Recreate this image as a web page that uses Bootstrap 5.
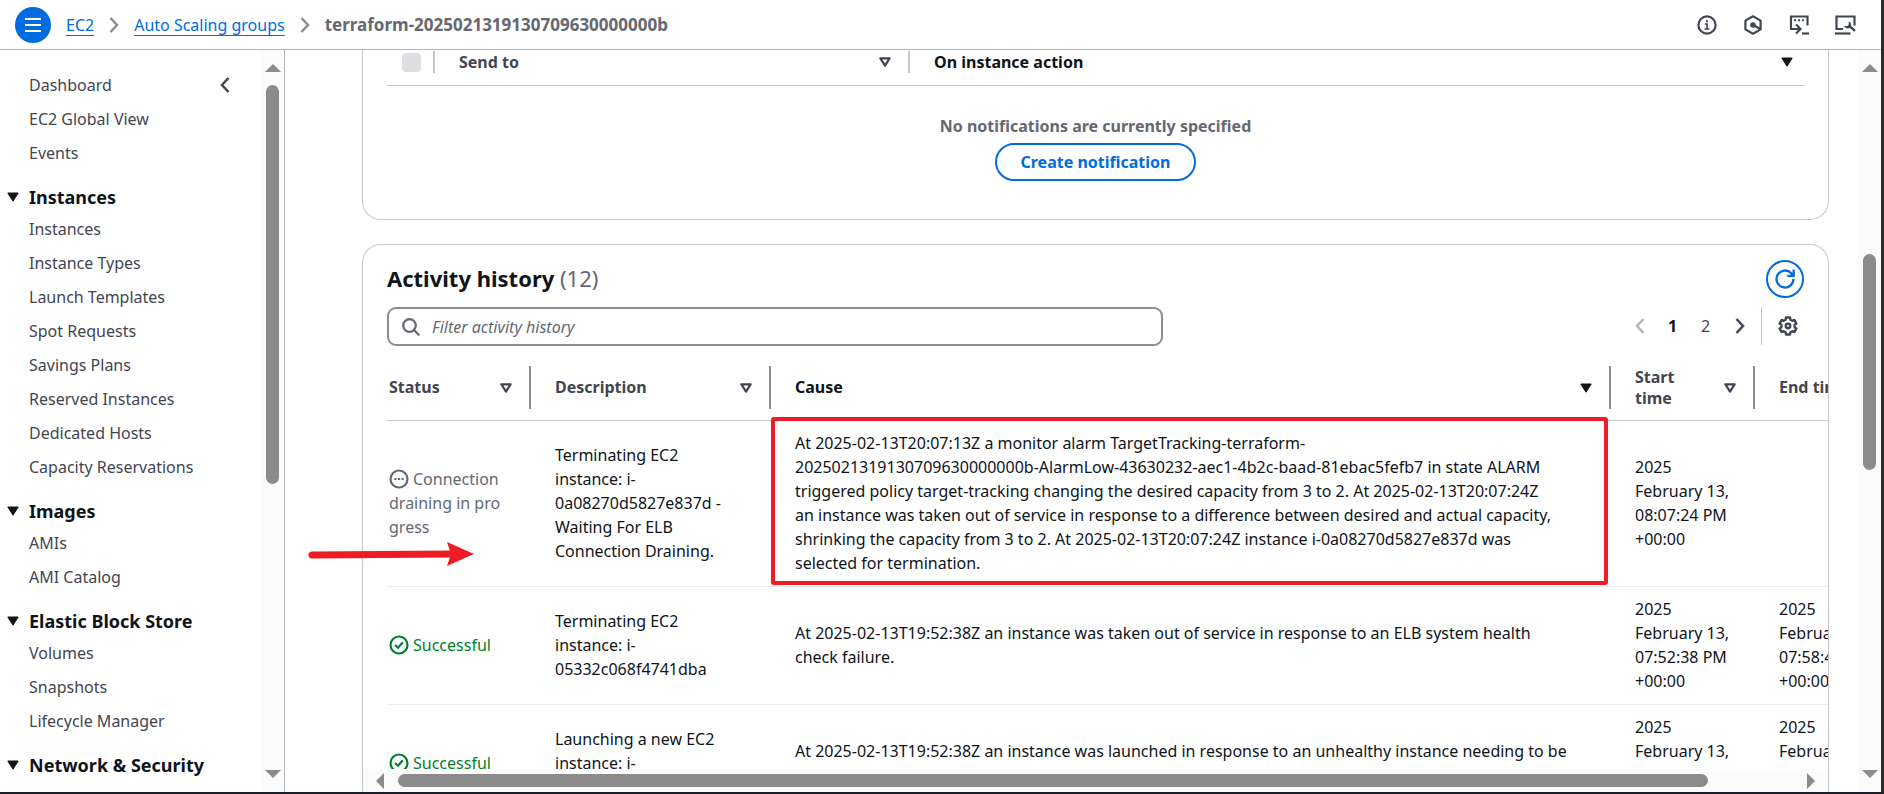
<!DOCTYPE html>
<html lang="en">
<head>
<meta charset="utf-8">
<meta name="viewport" content="width=device-width, initial-scale=1">
<title>Auto Scaling groups | EC2</title>
<link href="https://cdn.jsdelivr.net/npm/bootstrap@5.3.0/dist/css/bootstrap.min.css" rel="stylesheet">
<style>
  :root { --ink:#0f141a; --body:#424650; --muted:#656871; --line:#b4b4bb; --soft:#c6c6cd; --blue:#006ce0; --bar:#8b8b8b; }
  body { font-family:"Noto Sans","Open Sans",sans-serif; font-size:16px; line-height:24px; color:var(--ink); background:#fff; }
  .app { border-right:3px solid #2b2b2b; border-bottom:2px solid #1b1d29; }
  svg { display:block; flex:none; }
  a { color:var(--blue); }
  .plain-btn { background:none; border:0; padding:0; color:var(--body); }

  .topbar { height:50px; border-bottom:1px solid var(--line); padding:0 25px 8px 15px; }
  .menu-btn { width:36px; height:36px; border-radius:50%; background:var(--blue); border:0; padding:0; color:#fff; margin-right:15px; }
  .crumbs { gap:15px; }
  .crumbs a { text-underline-offset:4px; }
  .crumbs svg { color:#8c8c94; }
  .crumb-now { color:var(--muted); font-size:17px; font-weight:700; }
  .tools { gap:26px; }

  .side { width:285px; border-right:1px solid var(--line); }
  .side-nav { padding:18px 0 0 29px; }
  .side-nav ul { list-style:none; margin:0; padding:0; }
  .side-nav li a { display:block; line-height:34px; color:var(--body); text-decoration:none; white-space:nowrap; }
  .side-head { margin:12px 0 0 -22px; line-height:30px; font-size:18px; font-weight:700; gap:10px; white-space:nowrap; }
  .collapse-btn { right:30px; top:27px; }

  .track { background:#fbfbfb; }
  .track-v { width:23px; padding:14px 0; gap:13px; }
  .track-h { height:23px; padding:0 13px; gap:14px; }
  .thumb { background:var(--bar); border-radius:7px; }
  .track-v .thumb { width:13px; }
  .track-h .thumb { height:13px; }
  .track svg { color:var(--bar); }

  .content { padding:0 29px 0 77px; }
  .panel { border:1px solid var(--soft); background:#fff; }
  .panel-notify { border-top:0; border-radius:0 0 19px 19px; padding:0 24px 38px; }
  .panel-history { border-bottom:0; border-radius:19px 19px 0 0; margin-top:24px; }
  .panel-top { padding:15px 24px 0; }

  .grid-table { table-layout:fixed; border-collapse:separate; border-spacing:0; margin:0; }
  .grid-table th { color:var(--body); font-weight:700; line-height:21px; text-align:left; }
  .grid-table th.sorted { color:var(--ink); }
  .notify-table { width:100%; }
  .notify-table th { padding:1px 0 12px 0; border-bottom:1px solid var(--soft); }
  .notify-table .th-in { height:22px; padding:0 17px 0 24px; border-right:2px solid var(--soft); }
  .notify-table th:last-child .th-in { border:0; padding-right:11px; }
  .notify-table th:first-child .th-in { padding:0 12px 0 15px; }
  .tick { appearance:none; width:19px; height:19px; margin:0; border-radius:4px; background:#dedee3; }
  .empty { color:var(--muted); font-weight:700; padding-top:28px; }
  .create-btn { height:38px; padding:0 24px; border:2px solid var(--blue); border-radius:20px; background:#fff; color:var(--blue); font-weight:700; line-height:32px; margin-top:5px; }

  .title { font-size:22px; line-height:36px; font-weight:700; margin:0; }
  .title span { font-weight:400; color:var(--muted); }
  .refresh-btn { width:38px; height:38px; border:2px solid var(--blue); border-radius:50%; background:#fff; color:var(--blue); padding:0; }
  .filters { padding-top:9px; }
  .search { width:55%; max-width:776px; height:39px; border:2px solid #8c8c94; border-radius:9px; padding:0 13px; gap:12px; color:var(--muted); }
  .search input { border:0; outline:0; padding:0; background:none; min-width:0; }
  .search input::placeholder { color:var(--muted); font-style:italic; opacity:1; }
  .pager { height:38px; }
  .pager .page-no { width:35px; text-align:center; }
  .pager .page-no.on { color:var(--ink); font-weight:700; }
  .pager .gear { border-left:1px solid var(--soft); margin-left:16px; padding:0 6px 0 16px; height:38px; }

  .scroller { padding-left:24px; margin-top:9px; min-height:0; height:0; }
  .history-table { width:1560px; }
  .history-table th { padding:11px 0; border-bottom:1px solid var(--soft); }
  .history-table .th-in { height:43px; padding:0 17px 0 24px; border-right:2px solid #8c8c94; }
  .history-table td { padding:10px 24px 11px 24px; border-bottom:1px solid #ebebf0; vertical-align:middle; overflow-wrap:anywhere; }
  .history-table th:first-child .th-in, .history-table td:first-child { padding-left:2px; }
  .history-table td:nth-child(2), .history-table td:nth-child(4) { padding-right:10px; }
  .status-icon { display:inline-block; vertical-align:-4px; margin-right:4px; }
  .pending { color:var(--muted); }
  .ok { color:#00802f; }
  .marked { position:relative; }
  .marked::after { content:""; position:absolute; inset:-4px 3px 1px 0; border:4px solid #ee1c24; border-radius:3px; pointer-events:none; }
  .pointer-arrow { position:absolute; left:-55px; top:296px; }
</style>
</head>
<body>
<svg width="0" height="0" class="position-absolute" aria-hidden="true">
  <defs>
    <symbol id="i-down" viewBox="0 0 12 10"><path d="M0.800 1h10.400L6 9.200z" fill="currentColor" stroke="currentColor" stroke-linejoin="round"/></symbol>
    <symbol id="i-sort" viewBox="0 0 12 10"><path d="M1.400 1.300h9.200L6 8.600z" fill="none" stroke="currentColor" stroke-width="2.200" stroke-linejoin="round"/></symbol>
    <symbol id="i-next" viewBox="0 0 10 16"><path d="M1.500 1l6.500 7-6.500 7" fill="none" stroke="currentColor" stroke-width="2.500"/></symbol>
    <symbol id="i-prev" viewBox="0 0 10 16"><path d="M8.500 1L2 8l6.500 7" fill="none" stroke="currentColor" stroke-width="2.500"/></symbol>
    <symbol id="i-ok" viewBox="0 0 20 20"><circle cx="10" cy="10" r="8.500" fill="none" stroke="currentColor" stroke-width="2.200"/><path d="M6 10l3 2.700 4.800-5.400" fill="none" stroke="currentColor" stroke-width="2.200"/></symbol>
  </defs>
</svg>
<div class="app vh-100 d-flex flex-column overflow-hidden">
  <header class="topbar d-flex align-items-center flex-shrink-0 pt-2">
    <button class="menu-btn d-flex align-items-center justify-content-center" type="button" aria-label="Menu">
      <svg width="18" height="16" viewBox="0 0 18 16"><path d="M1 2h16M1 8h16M1 14h16" stroke="currentColor" stroke-width="2"/></svg>
    </button>
    <nav class="crumbs d-flex align-items-center" aria-label="Path">
      <a href="#">EC2</a>
      <svg width="10" height="16"><use href="#i-next"/></svg>
      <a href="#">Auto Scaling groups</a>
      <svg width="10" height="16"><use href="#i-next"/></svg>
      <span class="crumb-now">terraform-2025021319130709630000000b</span>
    </nav>
    <div class="tools d-flex ms-auto">
      <button class="plain-btn" type="button" aria-label="Info"><svg width="20" height="20" viewBox="0 0 20 20" fill="none" stroke="currentColor" stroke-width="2.200"><circle cx="10" cy="10" r="8.600"/><path d="M7.800 9H10v5M7.500 14h5" stroke-width="1.700"/><path d="M9 5.200h2v2H9z" fill="currentColor" stroke="none"/></svg></button>
      <button class="plain-btn" type="button" aria-label="Assistant"><svg width="20" height="20" viewBox="0 0 20 20" fill="none" stroke="currentColor" stroke-width="2.200"><path d="M10 1.300l7.600 4.300v8.800L10 18.700l-7.600-4.300V5.600z" stroke-linejoin="round"/><path d="M10 10l7.300 4"/><circle cx="10" cy="10" r="2.800" fill="currentColor" stroke="none"/></svg></button>
      <button class="plain-btn" type="button" aria-label="CloudShell"><svg width="20" height="20" viewBox="0 0 20 20" fill="none" stroke="currentColor" stroke-width="2.200"><path d="M2 14V1.500h16.500v9"/><path d="M5 5.300h2M9 5.300h2M13 5.300h2" stroke-width="2"/><path d="M1 14h10M7 9.500l4.500 4.500L7 18.500"/><path d="M13 18.500h7"/></svg></button>
      <button class="plain-btn" type="button" aria-label="Settings tools"><svg width="21" height="20" viewBox="0 0 21 20" fill="none" stroke="currentColor" stroke-width="2.200"><path d="M8 14H1.500V1.500h18v9"/><path d="M0 18.500h15.500"/><path d="M14.500 11l5.500 4.800" stroke-width="2.400"/><path d="M13.600 6.200a4 4 0 0 1 1.600 6.300 4 4 0 0 1-6.300-1.700l3.200.4 1.700-1.700z" fill="currentColor" stroke="none"/></svg></button>
    </div>
  </header>

  <div class="d-flex flex-grow-1 overflow-hidden">
    <aside class="side d-flex flex-shrink-0 position-relative">
      <button class="plain-btn collapse-btn position-absolute me-4" type="button" aria-label="Collapse"><svg width="10" height="16"><use href="#i-prev"/></svg></button>
      <nav class="side-nav flex-grow-1 overflow-hidden" aria-label="EC2">
        <ul>
          <li><a href="#">Dashboard</a></li>
          <li><a href="#">EC2 Global View</a></li>
          <li><a href="#">Events</a></li>
        </ul>
        <div class="side-head d-flex align-items-center"><svg width="12" height="10"><use href="#i-down"/></svg>Instances</div>
        <ul>
          <li><a href="#">Instances</a></li>
          <li><a href="#">Instance Types</a></li>
          <li><a href="#">Launch Templates</a></li>
          <li><a href="#">Spot Requests</a></li>
          <li><a href="#">Savings Plans</a></li>
          <li><a href="#">Reserved Instances</a></li>
          <li><a href="#">Dedicated Hosts</a></li>
          <li><a href="#">Capacity Reservations</a></li>
        </ul>
        <div class="side-head d-flex align-items-center"><svg width="12" height="10"><use href="#i-down"/></svg>Images</div>
        <ul>
          <li><a href="#">AMIs</a></li>
          <li><a href="#">AMI Catalog</a></li>
        </ul>
        <div class="side-head d-flex align-items-center"><svg width="12" height="10"><use href="#i-down"/></svg>Elastic Block Store</div>
        <ul>
          <li><a href="#">Volumes</a></li>
          <li><a href="#">Snapshots</a></li>
          <li><a href="#">Lifecycle Manager</a></li>
        </ul>
        <div class="side-head d-flex align-items-center"><svg width="12" height="10"><use href="#i-down"/></svg>Network &amp; Security</div>
      </nav>
      <div class="track track-v d-flex flex-column align-items-center flex-shrink-0">
        <svg width="16" height="8"><path d="M8 0l8 8H0z" fill="currentColor"/></svg>
        <div class="flex-grow-1 d-flex flex-column"><div class="thumb" style="flex:399"></div><div style="flex:273"></div></div>
        <svg width="16" height="8"><path d="M0 0h16L8 8z" fill="currentColor"/></svg>
      </div>
    </aside>

    <main class="content flex-grow-1 d-flex flex-column overflow-hidden">
      <section class="panel panel-notify flex-shrink-0">
        <table class="grid-table notify-table">
          <colgroup><col style="width:48px"><col style="width:475px"><col></colgroup>
          <thead><tr>
            <th><div class="th-in d-flex align-items-center"><input class="tick" type="checkbox" disabled aria-label="Select all"></div></th>
            <th><div class="th-in d-flex align-items-center justify-content-between">Send to<svg width="12" height="10"><use href="#i-sort"/></svg></div></th>
            <th class="sorted"><div class="th-in d-flex align-items-center justify-content-between">On instance action<svg width="12" height="10"><use href="#i-down"/></svg></div></th>
          </tr></thead>
        </table>
        <div class="text-center">
          <div class="empty">No notifications are currently specified</div>
          <button class="create-btn" type="button">Create notification</button>
        </div>
      </section>

      <section class="panel panel-history flex-grow-1 d-flex flex-column position-relative">
        <div class="panel-top flex-shrink-0">
          <div class="d-flex justify-content-between align-items-start">
            <h2 class="title">Activity history <span>(12)</span></h2>
            <button class="refresh-btn d-flex align-items-center justify-content-center" type="button" aria-label="Refresh"><svg width="20" height="20" viewBox="0 0 20 20" fill="none" stroke="currentColor" stroke-width="2.300"><path d="M18.500 10a8.500 8.500 0 1 1-2.300-5.800l1.800 1.900"/><path d="M18.700 0.500v6.400h-6.400"/></svg></button>
          </div>
          <div class="filters d-flex justify-content-between">
            <label class="search d-flex align-items-center">
              <svg width="18" height="18" viewBox="0 0 18 18" fill="none" stroke="currentColor" stroke-width="2.200"><circle cx="7.500" cy="7.500" r="6.300"/><path d="M12 12l5.300 5.300"/></svg>
              <input class="flex-grow-1" type="text" placeholder="Filter activity history" aria-label="Filter activity history">
            </label>
            <div class="pager d-flex align-items-center">
              <button class="plain-btn" type="button" aria-label="Previous" disabled style="color:#b4b4bb"><svg width="10" height="16"><use href="#i-prev"/></svg></button>
              <button class="plain-btn page-no on ms-2 ps-1" type="button">1</button>
              <button class="plain-btn page-no" type="button">2</button>
              <button class="plain-btn ms-2 ps-1" type="button" aria-label="Next"><svg width="10" height="16"><use href="#i-next"/></svg></button>
              <button class="plain-btn gear" type="button" aria-label="Preferences"><svg width="20" height="20" viewBox="0 0 16 16" fill="none" stroke="currentColor" stroke-width="1.900" stroke-linejoin="round"><path d="M6.150 2.930L6.310 1.210H9.690L9.850 2.930L11.470 3.860L13.040 3.140L14.730 6.070L13.320 7.060V8.940L14.730 9.930L13.040 12.860L11.470 12.140L9.850 13.070L9.690 14.790H6.310L6.150 13.070L4.530 12.140L2.960 12.860L1.270 9.930L2.680 8.940V7.060L1.270 6.070L2.960 3.140L4.530 3.860z"/><circle cx="8" cy="8" r="1.800"/></svg></button>
            </div>
          </div>
        </div>

        <div class="scroller flex-grow-1 overflow-hidden">
          <table class="grid-table history-table">
            <colgroup><col style="width:144px"><col style="width:240px"><col style="width:840px"><col style="width:144px"><col style="width:192px"></colgroup>
            <thead><tr>
              <th><div class="th-in d-flex align-items-center justify-content-between">Status<svg width="12" height="10"><use href="#i-sort"/></svg></div></th>
              <th><div class="th-in d-flex align-items-center justify-content-between">Description<svg width="12" height="10"><use href="#i-sort"/></svg></div></th>
              <th class="sorted"><div class="th-in d-flex align-items-center justify-content-between">Cause<svg width="12" height="10"><use href="#i-down"/></svg></div></th>
              <th><div class="th-in d-flex align-items-center justify-content-between">Start<br>time<svg width="12" height="10"><use href="#i-sort"/></svg></div></th>
              <th><div class="th-in d-flex align-items-center justify-content-between">End time<svg width="12" height="10"><use href="#i-sort"/></svg></div></th>
            </tr></thead>
            <tbody>
              <tr>
                <td class="pending"><svg class="status-icon" width="20" height="20" viewBox="0 0 20 20"><circle cx="10" cy="10" r="8.500" fill="none" stroke="currentColor" stroke-width="2.200"/><path d="M5.300 9h2.200v2H5.300zM8.900 9h2.200v2H8.900zM12.500 9h2.200v2h-2.200z" fill="currentColor"/></svg>Connection<br>draining in pro<br>gress</td>
                <td>Terminating EC2<br>instance: i-<br>0a08270d5827e837d -<br>Waiting For ELB<br>Connection Draining.</td>
                <td class="marked">At 2025-02-13T20:07:13Z a monitor alarm TargetTracking-terraform-<br>2025021319130709630000000b-AlarmLow-43630232-aec1-4b2c-baad-81ebac5fefb7 in state ALARM<br>triggered policy target-tracking changing the desired capacity from 3 to 2. At 2025-02-13T20:07:24Z<br>an instance was taken out of service in response to a difference between desired and actual capacity,<br>shrinking the capacity from 3 to 2. At 2025-02-13T20:07:24Z instance i-0a08270d5827e837d was<br>selected for termination.</td>
                <td>2025<br>February 13,<br>08:07:24 PM<br>+00:00</td>
                <td></td>
              </tr>
              <tr>
                <td class="ok"><svg class="status-icon" width="20" height="20"><use href="#i-ok"/></svg>Successful</td>
                <td>Terminating EC2<br>instance: i-<br>05332c068f4741dba</td>
                <td>At 2025-02-13T19:52:38Z an instance was taken out of service in response to an ELB system health<br>check failure.</td>
                <td>2025<br>February 13,<br>07:52:38 PM<br>+00:00</td>
                <td>2025<br>February 13,<br>07:58:42 PM<br>+00:00</td>
              </tr>
              <tr>
                <td class="ok"><svg class="status-icon" width="20" height="20"><use href="#i-ok"/></svg>Successful</td>
                <td>Launching a new EC2<br>instance: i-<br>0a08270d5827e837d</td>
                <td>At 2025-02-13T19:52:38Z an instance was launched in response to an unhealthy instance needing to be<br>replaced.</td>
                <td>2025<br>February 13,<br>07:52:40 PM<br>+00:00</td>
                <td>2025<br>February 13,<br>07:53:12 PM<br>+00:00</td>
              </tr>
            </tbody>
          </table>
        </div>
        <div class="track track-h d-flex align-items-center flex-shrink-0">
          <svg width="8" height="16"><path d="M8 0v16L0 8z" fill="currentColor"/></svg>
          <div class="flex-grow-1 d-flex"><div class="thumb" style="flex:1310"></div><div style="flex:85"></div></div>
          <svg width="8" height="16"><path d="M0 0l8 8-8 8z" fill="currentColor"/></svg>
        </div>
        <svg class="pointer-arrow" width="168" height="26" viewBox="0 0 168 26"><path d="M4 14L144 13" stroke="#ee1c24" stroke-width="7" stroke-linecap="round"/><path d="M139 1l27 12-27 12 4-12z" fill="#ee1c24"/></svg>
      </section>
    </main>

    <div class="track track-v d-flex flex-column align-items-center flex-shrink-0">
      <svg width="16" height="8"><path d="M8 0l8 8H0z" fill="currentColor"/></svg>
      <div class="flex-grow-1 d-flex flex-column"><div style="flex:169"></div><div class="thumb" style="flex:216"></div><div style="flex:287"></div></div>
      <svg width="16" height="8"><path d="M0 0h16L8 8z" fill="currentColor"/></svg>
    </div>
  </div>
</div>
<script src="https://cdn.jsdelivr.net/npm/bootstrap@5.3.0/dist/js/bootstrap.bundle.min.js"></script>
</body>
</html>
